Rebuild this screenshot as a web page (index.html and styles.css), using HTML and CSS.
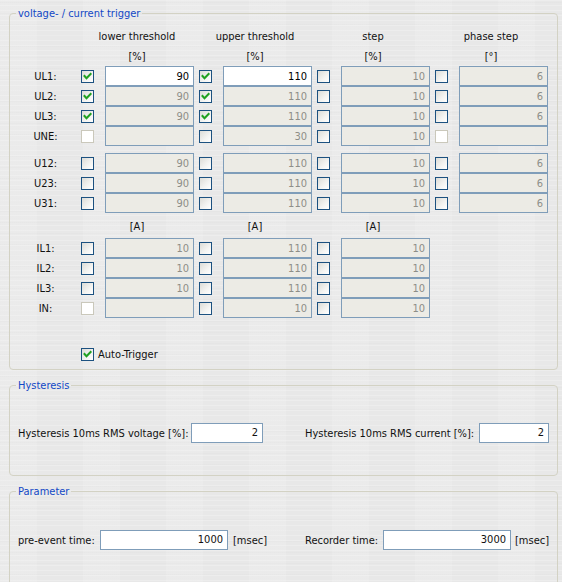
FILE: index.html
```html
<!DOCTYPE html>
<html>
<head>
<meta charset="utf-8">
<link rel="stylesheet" href="styles.css">
</head>
<body>
<fieldset class="group g-trigger">
  <legend>voltage- / current trigger</legend>
  <div class="trig">
    <span></span><span class="hd">lower threshold</span><span class="hd">upper threshold</span><span class="hd">step</span><span class="hd">phase step</span>
    <span></span><span class="hd">[%]</span><span class="hd">[%]</span><span class="hd">[%]</span><span class="hd">[°]</span>

    <span class="lbl">UL1:</span>
    <span class="cb on"><svg viewBox="0 0 11 11"><polyline points="2.5,5 4.5,7.2 8.6,3"/></svg></span><span class="ed en">90</span>
    <span class="cb on"><svg viewBox="0 0 11 11"><polyline points="2.5,5 4.5,7.2 8.6,3"/></svg></span><span class="ed en">110</span>
    <span class="cb"></span><span class="ed">10</span>
    <span class="cb"></span><span class="ed">6</span>

    <span class="lbl">UL2:</span>
    <span class="cb on"><svg viewBox="0 0 11 11"><polyline points="2.5,5 4.5,7.2 8.6,3"/></svg></span><span class="ed">90</span>
    <span class="cb on"><svg viewBox="0 0 11 11"><polyline points="2.5,5 4.5,7.2 8.6,3"/></svg></span><span class="ed">110</span>
    <span class="cb"></span><span class="ed">10</span>
    <span class="cb"></span><span class="ed">6</span>

    <span class="lbl">UL3:</span>
    <span class="cb on"><svg viewBox="0 0 11 11"><polyline points="2.5,5 4.5,7.2 8.6,3"/></svg></span><span class="ed">90</span>
    <span class="cb on"><svg viewBox="0 0 11 11"><polyline points="2.5,5 4.5,7.2 8.6,3"/></svg></span><span class="ed">110</span>
    <span class="cb"></span><span class="ed">10</span>
    <span class="cb"></span><span class="ed">6</span>

    <span class="lbl">UNE:</span>
    <span class="cb dis"></span><span class="ed"></span>
    <span class="cb"></span><span class="ed">30</span>
    <span class="cb"></span><span class="ed">10</span>
    <span class="cb dis"></span><span class="ed"></span>

    <div class="sp sp-a"></div>

    <span class="lbl">U12:</span>
    <span class="cb"></span><span class="ed">90</span>
    <span class="cb"></span><span class="ed">110</span>
    <span class="cb"></span><span class="ed">10</span>
    <span class="cb"></span><span class="ed">6</span>

    <span class="lbl">U23:</span>
    <span class="cb"></span><span class="ed">90</span>
    <span class="cb"></span><span class="ed">110</span>
    <span class="cb"></span><span class="ed">10</span>
    <span class="cb"></span><span class="ed">6</span>

    <span class="lbl">U31:</span>
    <span class="cb"></span><span class="ed">90</span>
    <span class="cb"></span><span class="ed">110</span>
    <span class="cb"></span><span class="ed">10</span>
    <span class="cb"></span><span class="ed">6</span>

    <span></span><span class="hd">[A]</span><span class="hd">[A]</span><span class="hd">[A]</span><span class="hd"></span>

    <span class="lbl">IL1:</span>
    <span class="cb"></span><span class="ed">10</span>
    <span class="cb"></span><span class="ed">110</span>
    <span class="cb"></span><span class="ed">10</span>
    <span class="empty"></span>

    <span class="lbl">IL2:</span>
    <span class="cb"></span><span class="ed">10</span>
    <span class="cb"></span><span class="ed">110</span>
    <span class="cb"></span><span class="ed">10</span>
    <span class="empty"></span>

    <span class="lbl">IL3:</span>
    <span class="cb"></span><span class="ed">10</span>
    <span class="cb"></span><span class="ed">110</span>
    <span class="cb"></span><span class="ed">10</span>
    <span class="empty"></span>

    <span class="lbl">IN:</span>
    <span class="cb dis"></span><span class="ed"></span>
    <span class="cb"></span><span class="ed">10</span>
    <span class="cb"></span><span class="ed">10</span>
    <span class="empty"></span>

    <div class="sp sp-b"></div>

    <span></span>
    <span class="auto"><span class="cb on"><svg viewBox="0 0 11 11"><polyline points="2.5,5 4.5,7.2 8.6,3"/></svg></span><span class="auto-t">Auto-Trigger</span></span>
  </div>
</fieldset>

<fieldset class="group g-hyst">
  <legend>Hysteresis</legend>
  <div class="pair-row">
    <div class="pair"><span class="plbl w-hv">Hysteresis 10ms RMS voltage [%]:</span><span class="box w72">2</span></div>
    <div class="pair"><span class="plbl w-hc">Hysteresis 10ms RMS current [%]:</span><span class="box w70">2</span></div>
  </div>
</fieldset>

<fieldset class="group g-param">
  <legend>Parameter</legend>
  <div class="pair-row">
    <div class="pair"><span class="plbl w-pre">pre-event time:</span><span class="box w128">1000</span><span class="unit u1">[msec]</span></div>
    <div class="pair"><span class="plbl w-rec">Recorder time:</span><span class="box w128">3000</span><span class="unit u2">[msec]</span></div>
  </div>
</fieldset>
</body>
</html>
```

FILE: styles.css
```css
html, body {
  margin: 0;
  padding: 0;
}

body {
  width: 562px;
  height: 582px;
  overflow: hidden;
  font-family: "DejaVu Sans Condensed", "DejaVu Sans", sans-serif;
  font-stretch: condensed;
  font-size: 11px;
  color: #111;
  background-color: #e8e8e8;
  background-image:
    repeating-linear-gradient(180deg, rgba(255,255,255,0.22) 0 1px, rgba(255,255,255,0) 1px 5px),
    repeating-linear-gradient(180deg, rgba(0,0,0,0) 0 2px, rgba(0,0,0,0.012) 2px 3px, rgba(0,0,0,0) 3px 11px),
    repeating-linear-gradient(90deg, rgba(255,255,255,0.12) 0 37px, rgba(255,255,255,0) 37px 83px);
}

.group {
  box-sizing: border-box;
  width: 549px;
  margin: 0 0 0 9px;
  padding: 0;
  border: 1px solid #d3d2c4;
  border-radius: 4px;
  min-width: 0;
}

.group legend {
  margin-left: 6px;
  padding: 0 2px;
  line-height: 13px;
  height: 13px;
  color: #1248c6;
}

.g-trigger {
  margin-top: 7px;
  padding-top: 6px;
  padding-bottom: 7px;
}

.trig {
  display: grid;
  grid-template-columns: 71px repeat(4, 24px 94px);
  grid-template-rows: 20px 20px repeat(4, 20px) 7px repeat(3, 20px) 25px repeat(4, 20px) 28px 16px;
  align-items: center;
}

.hd {
  grid-column: span 2;
  text-align: center;
  padding-right: 6px;
  line-height: 14px;
  padding-top: 2px;
}

.lbl {
  text-align: center;
  line-height: 14px;
  padding-top: 1px;
}

.empty {
  grid-column: span 2;
}

.sp {
  grid-column: 1 / -1;
}

.cb {
  box-sizing: border-box;
  width: 13px;
  height: 13px;
  border: 1px solid #1c5180;
  background: linear-gradient(135deg, #dcdcd7 0%, #f4f4f2 60%, #ffffff 100%);
  display: block;
}

.cb svg {
  display: block;
  width: 11px;
  height: 11px;
}

.cb svg polyline {
  fill: none;
  stroke: #21a121;
  stroke-width: 2;
  stroke-linecap: square;
}

.cb.dis {
  border-color: #cac8bb;
  background: #ffffff;
}

.ed {
  box-sizing: border-box;
  width: 89px;
  height: 20px;
  border: 1px solid #7f9db9;
  background: #ecebe5;
  color: #8e8e88;
  text-align: right;
  padding-right: 4px;
  line-height: 19px;
}

.ed.en {
  background: #ffffff;
  color: #000;
}

.auto {
  grid-column: span 8;
  display: flex;
  align-items: center;
}

.auto-t {
  margin-left: 4px;
}

.g-hyst {
  margin-top: 9px;
  padding-top: 31px;
  padding-bottom: 32px;
}

.g-param {
  margin-top: 9px;
  padding-top: 32px;
  padding-bottom: 40px;
}

.pair-row {
  display: grid;
  grid-template-columns: 287px 1fr;
  padding-left: 8px;
}

.pair {
  display: flex;
  align-items: center;
  height: 20px;
}

.plbl {
  white-space: nowrap;
}

.w-hv { width: 173px; }
.w-hc { width: 174px; }
.w-pre { width: 82px; }
.w-rec { width: 78px; }

.box {
  box-sizing: border-box;
  height: 20px;
  border: 1px solid #7f9db9;
  background: #ffffff;
  text-align: right;
  padding-right: 4px;
  line-height: 18px;
}

.w72 { width: 72px; }
.w70 { width: 70px; }
.w128 { width: 128px; }

.u1 { margin-left: 5px; }
.u2 { margin-left: 4px; }
```
